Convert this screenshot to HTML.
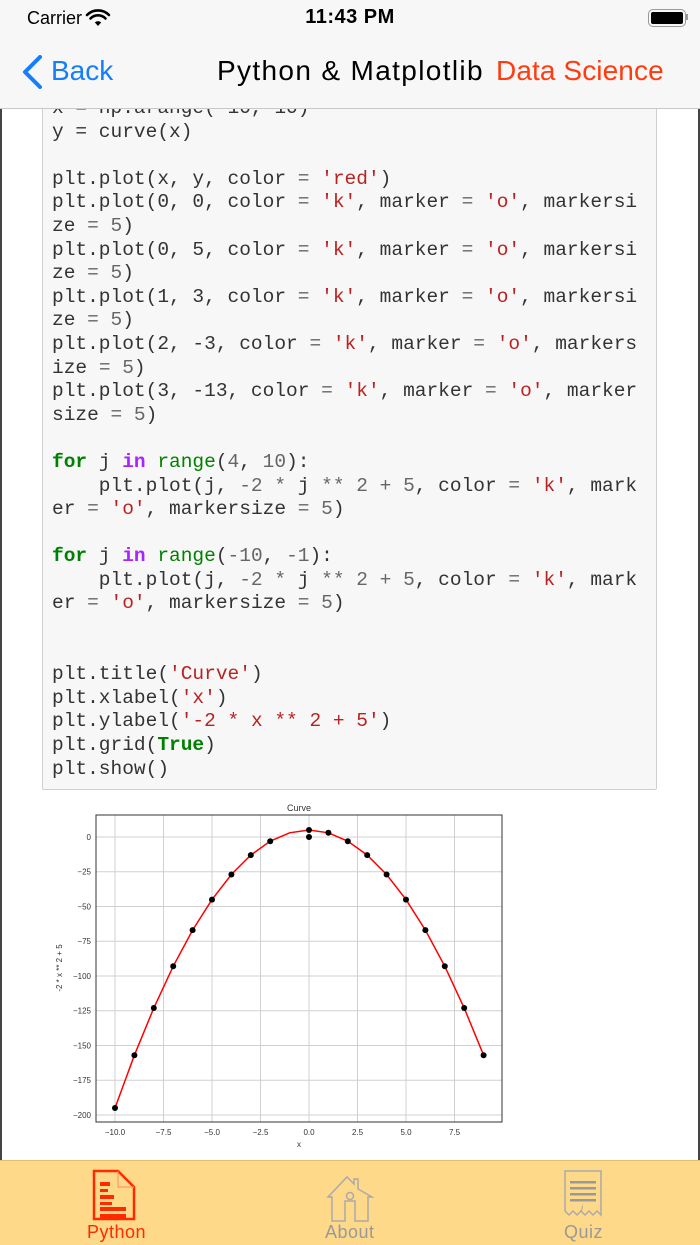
<!DOCTYPE html>
<html><head><meta charset="utf-8"><style>
body{margin:0;width:700px;height:1244px;overflow:hidden;background:#fff;font-family:"Liberation Sans",sans-serif;position:relative}
.edge{position:absolute;top:0;bottom:0;width:2px;background:#444}
#code{position:absolute;left:42px;top:60px;width:613px;height:728px;background:#f7f7f7;border:1px solid #cfcfcf;border-radius:2px;overflow:hidden}
pre{margin:0;position:absolute;left:9px;top:36px;font-family:"Liberation Mono",monospace;font-size:19.5px;line-height:23.6px;color:#333}
.k{color:#008000;font-weight:bold}.b{color:#008000}.p{color:#aa22ff;font-weight:bold}.s{color:#ba2121}.o{color:#666}
#nav{position:absolute;left:0;top:0;width:700px;height:108px;background:#f7f7f7;border-bottom:1px solid #c8c8c8}
#tab{position:absolute;left:0;top:1160px;width:700px;height:84px;background:#fed98a;border-top:1px solid #e0c070}
</style></head><body>
<div class="edge" style="left:0"></div><div class="edge" style="right:0"></div>
<div id="code"><pre>x = np.arange(-10, 10)
y = curve(x)

plt.plot(x, y, color <span class="o">=</span> <span class="s">'red'</span>)
plt.plot(0, 0, color <span class="o">=</span> <span class="s">'k'</span>, marker <span class="o">=</span> <span class="s">'o'</span>, markersi
ze <span class="o">=</span> <span class="o">5</span>)
plt.plot(0, 5, color <span class="o">=</span> <span class="s">'k'</span>, marker <span class="o">=</span> <span class="s">'o'</span>, markersi
ze <span class="o">=</span> <span class="o">5</span>)
plt.plot(1, 3, color <span class="o">=</span> <span class="s">'k'</span>, marker <span class="o">=</span> <span class="s">'o'</span>, markersi
ze <span class="o">=</span> <span class="o">5</span>)
plt.plot(2, -3, color <span class="o">=</span> <span class="s">'k'</span>, marker <span class="o">=</span> <span class="s">'o'</span>, markers
ize <span class="o">=</span> <span class="o">5</span>)
plt.plot(3, -13, color <span class="o">=</span> <span class="s">'k'</span>, marker <span class="o">=</span> <span class="s">'o'</span>, marker
size <span class="o">=</span> <span class="o">5</span>)

<span class="k">for</span> j <span class="p">in</span> <span class="b">range</span>(<span class="o">4</span>, <span class="o">10</span>):
    plt.plot(j, <span class="o">-2</span> <span class="o">*</span> j <span class="o">**</span> <span class="o">2</span> <span class="o">+</span> <span class="o">5</span>, color <span class="o">=</span> <span class="s">'k'</span>, mark
er <span class="o">=</span> <span class="s">'o'</span>, markersize <span class="o">=</span> <span class="o">5</span>)

<span class="k">for</span> j <span class="p">in</span> <span class="b">range</span>(<span class="o">-10</span>, <span class="o">-1</span>):
    plt.plot(j, <span class="o">-2</span> <span class="o">*</span> j <span class="o">**</span> <span class="o">2</span> <span class="o">+</span> <span class="o">5</span>, color <span class="o">=</span> <span class="s">'k'</span>, mark
er <span class="o">=</span> <span class="s">'o'</span>, markersize <span class="o">=</span> <span class="o">5</span>)


plt.title(<span class="s">'Curve'</span>)
plt.xlabel(<span class="s">'x'</span>)
plt.ylabel(<span class="s">'-2 * x ** 2 + 5'</span>)
plt.grid(<span class="k">True</span>)
plt.show()</pre></div>

<svg style="position:absolute;left:0;top:0" width="700" height="1244" font-family="Liberation Sans, sans-serif">
<g stroke="#d0d0d0" stroke-width="1">
<path d="M115 815V1122M163.5 815V1122M212 815V1122M260.5 815V1122M309 815V1122M357.5 815V1122M406 815V1122M454.5 815V1122"/>
<path d="M96 837H502M96 871.75H502M96 906.5H502M96 941.25H502M96 976H502M96 1010.75H502M96 1045.5H502M96 1080.25H502M96 1115H502"/>
</g>
<rect x="96" y="815" width="406" height="307" fill="none" stroke="#333" stroke-width="1"/>
<polyline fill="none" stroke="#f00" stroke-width="1.5" points="115,1108 134.4,1055.2 153.8,1008 173.2,966.3 192.6,930.1 212,899.6 231.4,874.5 250.8,855.1 270.2,841.2 289.6,832.8 309,830 328.4,832.8 347.8,841.2 367.2,855.1 386.6,874.5 406,899.6 425.4,930.1 444.8,966.3 464.2,1008 483.6,1055.2"/>
<g fill="#000">
<circle cx="115" cy="1108" r="3"/><circle cx="134.4" cy="1055.2" r="3"/><circle cx="153.8" cy="1008" r="3"/><circle cx="173.2" cy="966.3" r="3"/><circle cx="192.6" cy="930.1" r="3"/><circle cx="212" cy="899.6" r="3"/><circle cx="231.4" cy="874.5" r="3"/><circle cx="250.8" cy="855.1" r="3"/><circle cx="270.2" cy="841.2" r="3"/><circle cx="309" cy="830" r="3"/><circle cx="309" cy="837" r="3"/><circle cx="328.4" cy="832.8" r="3"/><circle cx="347.8" cy="841.2" r="3"/><circle cx="367.2" cy="855.1" r="3"/><circle cx="386.6" cy="874.5" r="3"/><circle cx="406" cy="899.6" r="3"/><circle cx="425.4" cy="930.1" r="3"/><circle cx="444.8" cy="966.3" r="3"/><circle cx="464.2" cy="1008" r="3"/><circle cx="483.6" cy="1055.2" r="3"/>
</g>
<g font-size="8" fill="#333" text-anchor="end">
<text x="91" y="840">0</text><text x="91" y="874.5">−25</text><text x="91" y="909.5">−50</text><text x="91" y="944">−75</text><text x="91" y="979">−100</text><text x="91" y="1013.5">−125</text><text x="91" y="1048.5">−150</text><text x="91" y="1083">−175</text><text x="91" y="1118">−200</text>
</g>
<g font-size="8" fill="#333" text-anchor="middle">
<text x="115" y="1135">−10.0</text><text x="163.5" y="1135">−7.5</text><text x="212" y="1135">−5.0</text><text x="260.5" y="1135">−2.5</text><text x="309" y="1135">0.0</text><text x="357.5" y="1135">2.5</text><text x="406" y="1135">5.0</text><text x="454.5" y="1135">7.5</text>
<text x="299" y="1147">x</text>
<text x="299" y="811" font-size="9">Curve</text>
<text transform="translate(62 968) rotate(-90)">-2 * x ** 2 + 5</text>
</g>
</svg>

<div id="nav">
<div style="position:absolute;left:27px;top:8px;font-size:18px;color:#000">Carrier</div>
<svg style="position:absolute;left:85px;top:8px" width="26" height="20" viewBox="0 0 26 20"><path d="M13 18l-3.2-3.6a4.6 4.6 0 016.4 0z" fill="#000"/><path d="M5.5 10.5a10.5 10.5 0 0115 0M2 7a15.5 15.5 0 0122 0" stroke="#000" stroke-width="2.6" fill="none" stroke-linecap="round"/></svg>
<div style="position:absolute;left:0;width:700px;top:6px;text-align:center;font-size:20px;font-weight:bold;letter-spacing:0.5px;color:#000">11:43 PM</div>
<div style="position:absolute;left:648px;top:9px;width:36px;height:16px;border:1.5px solid #999;border-radius:5px"><div style="margin:2px;height:12px;width:32px;background:#000;border-radius:2px"></div></div>
<div style="position:absolute;left:686px;top:14px;width:2px;height:6px;background:#999"></div>
<svg style="position:absolute;left:20px;top:54px" width="26" height="36"><path d="M20 3L5 18l15 15" stroke="#147efb" stroke-width="4" fill="none" stroke-linecap="round" stroke-linejoin="round"/></svg>
<div style="position:absolute;left:51px;top:55px;font-size:28px;color:#147efb">Back</div>
<div style="position:absolute;left:217px;top:55px;font-size:28px;letter-spacing:1.35px;color:#000;white-space:nowrap">Python &amp; Matplotlib</div>
<div style="position:absolute;left:496px;top:55px;font-size:28px;letter-spacing:0.1px;color:#ff3b0f;white-space:nowrap">Data Science</div>
</div>

<div id="tab">
<svg style="position:absolute;left:92px;top:8px" width="48" height="52"><path d="M2 2H26L42 18V50H2Z" fill="none" stroke="#ff2a00" stroke-width="2.5"/><path d="M26 2V18H42" fill="none" stroke="#ff8a60" stroke-width="1"/><g fill="#ff2a00"><rect x="8" y="13" width="10" height="4"/><rect x="8" y="20" width="8" height="3"/><rect x="8" y="26" width="14" height="4"/><rect x="8" y="33" width="12" height="3"/><rect x="8" y="38" width="26" height="4"/><rect x="8" y="45" width="26" height="4"/></g></svg>
<div style="position:absolute;left:87px;top:61px;font-size:18px;letter-spacing:0.5px;color:#ff2a00">Python</div>
<svg style="position:absolute;left:325px;top:10px" width="50" height="52"><path d="M3 26L22 6L29 13V8H33V18L47 26H43V50H30V30H20V50H7V26Z" fill="none" stroke="#aaa" stroke-width="1.5"/><circle cx="25" cy="25" r="3.5" fill="none" stroke="#aaa" stroke-width="1.5"/></svg>
<div style="position:absolute;left:325px;top:61px;font-size:18px;letter-spacing:0.5px;color:#999">About</div>
<svg style="position:absolute;left:563px;top:8px" width="40" height="52"><path d="M2 2H38V46L34 42L30 46L26 42L22 46L18 42L14 46L10 42L6 46L2 42Z" fill="none" stroke="#aaa" stroke-width="1.5"/><g fill="#999"><rect x="7" y="12" width="26" height="2.5"/><rect x="7" y="18" width="26" height="2.5"/><rect x="7" y="24" width="26" height="2.5"/><rect x="7" y="30" width="26" height="2.5"/></g><text x="18" y="42" font-size="9" fill="#999" font-style="italic">i</text></svg>
<div style="position:absolute;left:564px;top:61px;font-size:18px;letter-spacing:0.5px;color:#999">Quiz</div>
</div>
</body></html>
